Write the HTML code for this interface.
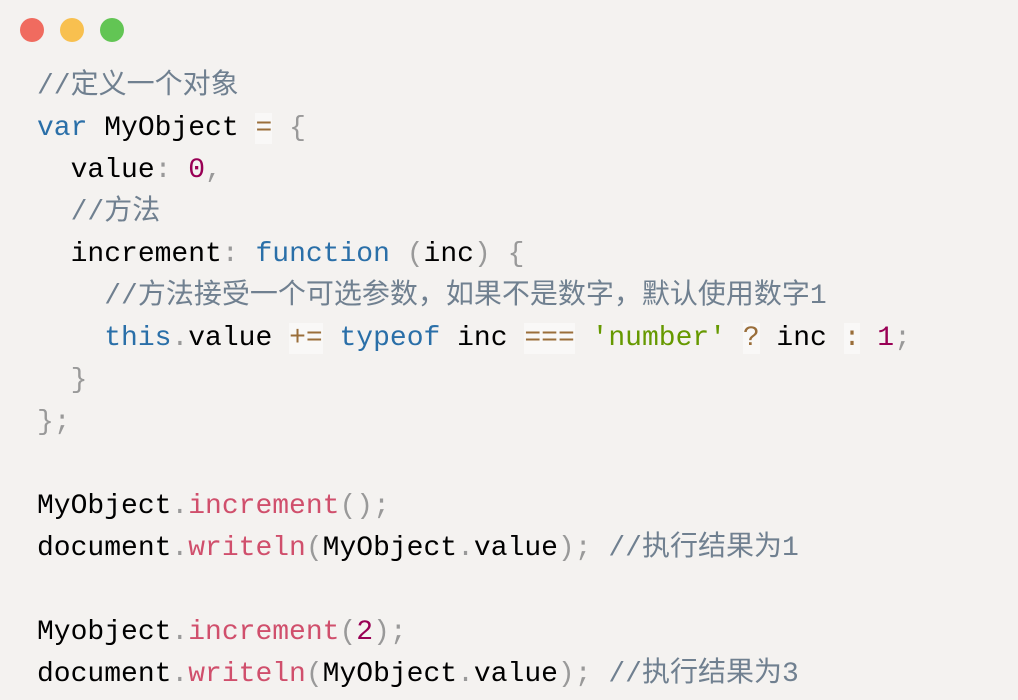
<!DOCTYPE html>
<html><head><meta charset="utf-8"><style>
html,body{margin:0;padding:0;background:#f4f2f0;width:1018px;height:700px;overflow:hidden}
.dot{position:absolute;top:18px;width:24px;height:24px;border-radius:50%}
pre{position:absolute;left:37px;top:66px;margin:0;font-family:"Liberation Mono","Noto Sans CJK SC",monospace;font-size:28px;line-height:42px;color:#000}
.c{color:#708090}.k{color:#2a6fa8}.p{color:#999}.n{color:#905}.s{color:#690}.f{color:#d04f6c}
.o{color:#9a6e3a;background:#f9f8f7}
</style></head><body>
<div class="dot" style="left:20px;background:#f06b5f"></div>
<div class="dot" style="left:60px;background:#f8c04f"></div>
<div class="dot" style="left:100px;background:#62c554"></div>
<pre><span class="c">//定义一个对象</span>
<span class="k">var</span> MyObject <span class="o">=</span> <span class="p">{</span>
  value<span class="p">:</span> <span class="n">0</span><span class="p">,</span>
  <span class="c">//方法</span>
  increment<span class="p">:</span> <span class="k">function</span> <span class="p">(</span>inc<span class="p">)</span> <span class="p">{</span>
    <span class="c">//方法接受一个可选参数，如果不是数字，默认使用数字1</span>
    <span class="k">this</span><span class="p">.</span>value <span class="o">+=</span> <span class="k">typeof</span> inc <span class="o">===</span> <span class="s">'number'</span> <span class="o">?</span> inc <span class="o">:</span> <span class="n">1</span><span class="p">;</span>
  <span class="p">}</span>
<span class="p">};</span>

MyObject<span class="p">.</span><span class="f">increment</span><span class="p">();</span>
document<span class="p">.</span><span class="f">writeln</span><span class="p">(</span>MyObject<span class="p">.</span>value<span class="p">);</span> <span class="c">//执行结果为1</span>

Myobject<span class="p">.</span><span class="f">increment</span><span class="p">(</span><span class="n">2</span><span class="p">);</span>
document<span class="p">.</span><span class="f">writeln</span><span class="p">(</span>MyObject<span class="p">.</span>value<span class="p">);</span> <span class="c">//执行结果为3</span></pre>
</body></html>
